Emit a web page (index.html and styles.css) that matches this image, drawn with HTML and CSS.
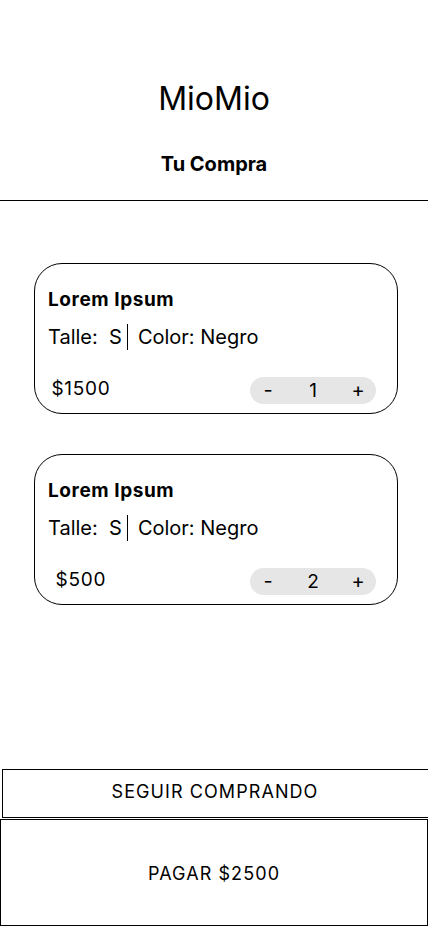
FILE: index.html
```html
<!DOCTYPE html>
<html lang="es">
<head>
<meta charset="utf-8">
<title>MioMio - Tu Compra</title>
<link rel="stylesheet" href="styles.css">
</head>
<body>
<div class="page">
  <header class="header">
    <h1 class="brand">MioMio</h1>
    <h2 class="subtitle">Tu Compra</h2>
  </header>

  <main class="cart">
    <article class="item">
      <h3 class="item-name">Lorem Ipsum</h3>
      <p class="item-meta">Talle:&nbsp; S<span class="sep">Color: Negro</span></p>
      <div class="item-row">
        <span class="price">$1500</span>
        <div class="stepper">
          <span class="step-btn">-</span>
          <span class="qty">1</span>
          <span class="step-btn">+</span>
        </div>
      </div>
    </article>

    <article class="item">
      <h3 class="item-name">Lorem Ipsum</h3>
      <p class="item-meta">Talle:&nbsp; S<span class="sep">Color: Negro</span></p>
      <div class="item-row">
        <span class="price">$500</span>
        <div class="stepper">
          <span class="step-btn">-</span>
          <span class="qty">2</span>
          <span class="step-btn">+</span>
        </div>
      </div>
    </article>
  </main>

  <footer class="actions">
    <div class="btn btn-secondary">SEGUIR COMPRANDO</div>
    <div class="btn btn-primary">PAGAR $2500</div>
  </footer>
</div>
</body>
</html>
```

FILE: styles.css
```css
* { box-sizing: border-box; }

html, body {
  margin: 0;
  padding: 0;
  background: #fff;
}

body {
  font-family: Inter, "Noto Sans", sans-serif;
  color: #000;
}

.page {
  width: 428px;
  min-height: 926px;
  display: flex;
  flex-direction: column;
  overflow: hidden;
}

.header {
  padding: 79px 0 24px;
  border-bottom: 1px solid #000;
  text-align: center;
  display: flex;
  flex-direction: column;
  gap: 34px;
}

.brand {
  margin: 0;
  font-size: 32px;
  line-height: 39px;
  font-weight: 400;
}

.subtitle {
  margin: 0;
  font-size: 20px;
  line-height: 24px;
  font-weight: 700;
}

.cart {
  display: flex;
  flex-direction: column;
  gap: 40px;
  padding: 62px 30px 0 34px;
}

.item {
  border: 1px solid #000;
  border-radius: 28px;
  height: 151px;
  padding: 25px 21px 0 13px;
  display: flex;
  flex-direction: column;
}

.item-name {
  margin: 0;
  font-size: 19px;
  line-height: 22px;
  font-weight: 700;
  letter-spacing: 0.03em;
}

.item-meta {
  margin: 13px 0 0;
  font-size: 20px;
  line-height: 26px;
}

.sep {
  display: inline-block;
  border-left: 1.5px solid #000;
  margin-left: 5px;
  padding-left: 10px;
}

.item-row {
  margin-top: 27px;
  display: flex;
  justify-content: space-between;
  align-items: flex-start;
}

.price {
  width: 66px;
  text-align: center;
  font-size: 19px;
  line-height: 23px;
  letter-spacing: 0.04em;
}

.stepper {
  width: 126px;
  height: 27px;
  border-radius: 14px;
  background: #e6e6e6;
  display: grid;
  grid-template-columns: 36px 1fr 36px;
  align-items: center;
  text-align: center;
  font-size: 19px;
  line-height: 27px;
}

.step-btn {
  font-size: 20px;
}

.actions {
  margin-top: auto;
  display: flex;
  flex-direction: column;
  gap: 1px;
}

.btn {
  display: flex;
  align-items: center;
  justify-content: center;
  font-size: 18px;
  letter-spacing: 0.06em;
  border: 1px solid #000;
}

.btn-secondary {
  width: 428px;
  margin-left: 2px;
  height: 49px;
  padding-bottom: 5px;
  padding-right: 2px;
}

.btn-primary {
  width: 428px;
  height: 107px;
  padding-top: 1px;
}
```
